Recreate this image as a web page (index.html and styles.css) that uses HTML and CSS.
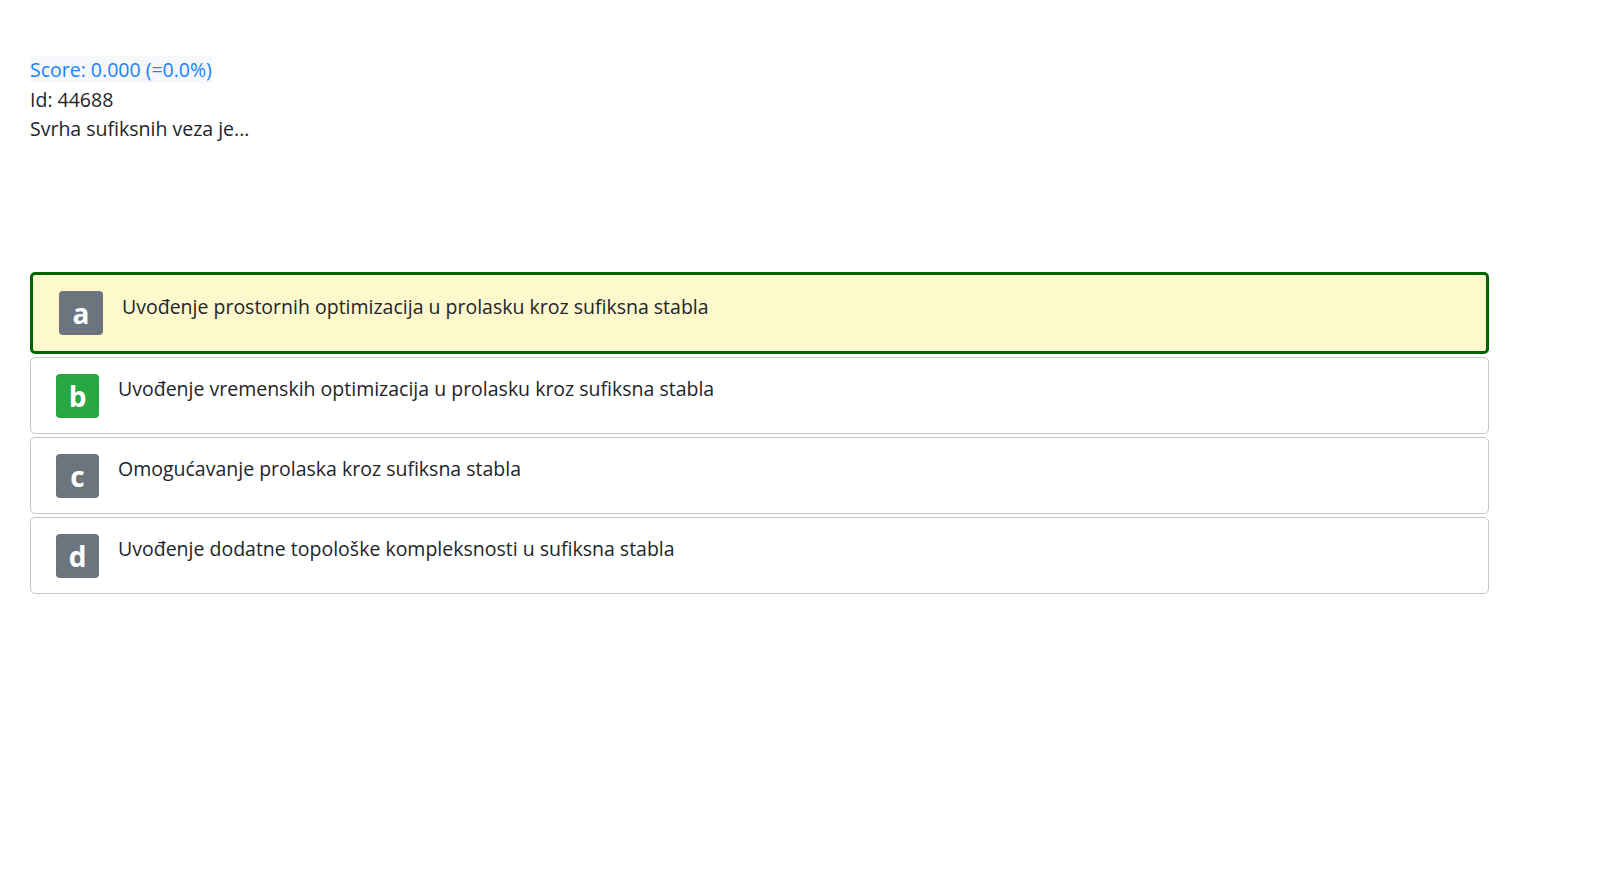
FILE: index.html
```html
<!DOCTYPE html>
<html lang="hr">
<head>
<meta charset="utf-8">
<title>Pitanje</title>
<link rel="stylesheet" href="styles.css">
</head>
<body>
<div class="page">
  <div class="meta">
    <div class="line"><span class="score">Score: 0.000 (=0.0%)</span></div>
    <div class="line">Id: 44688</div>
    <div class="line">Svrha sufiksnih veza je...</div>
  </div>
  <div class="answers">
    <div class="answer selected">
      <div class="badge gray">a</div>
      <div class="answer-text">Uvođenje prostornih optimizacija u prolasku kroz sufiksna stabla</div>
    </div>
    <div class="answer">
      <div class="badge green">b</div>
      <div class="answer-text">Uvođenje vremenskih optimizacija u prolasku kroz sufiksna stabla</div>
    </div>
    <div class="answer">
      <div class="badge gray">c</div>
      <div class="answer-text">Omogućavanje prolaska kroz sufiksna stabla</div>
    </div>
    <div class="answer">
      <div class="badge gray">d</div>
      <div class="answer-text">Uvođenje dodatne topološke kompleksnosti u sufiksna stabla</div>
    </div>
  </div>
</div>
</body>
</html>
```

FILE: styles.css
```css
html, body {
  margin: 0;
  padding: 0;
  background: #ffffff;
}

body {
  font-family: "Open Sans", "Noto Sans", "Liberation Sans", sans-serif;
  font-size: 19.5px;
  line-height: 1.5;
  color: #212529;
}

.page {
  padding: 55px 112px 40px 30px;
}

.meta .line {
  height: 29.5px;
}

.score {
  color: #1a82ff;
  background: #f6f8fb;
}

.answers {
  margin-top: 128px;
  display: flex;
  flex-direction: column;
  gap: 3px;
}

.answer {
  display: flex;
  align-items: flex-start;
  gap: 19px;
  padding: 16px 25px 15px 25px;
  border: 1px solid #c8c8c8;
  border-radius: 5px;
  background: #ffffff;
}

.answer.selected {
  border: 3px solid #006400;
  padding: 16px 26px 16px 26px;
  background: #fef8cd;
}

.badge {
  width: 43px;
  height: 44px;
  flex: 0 0 auto;
  border-radius: 4px;
  color: #ffffff;
  font-weight: 700;
  font-size: 28px;
  line-height: 44px;
  text-align: center;
}

.answer.selected .badge {
  width: 44px;
}

.badge.gray {
  background: #6c757d;
}

.badge.green {
  background: #28a745;
}

.answer-text {
  padding-top: 0;
}

.answer.selected .answer-text {
  padding-top: 1px;
}
```
